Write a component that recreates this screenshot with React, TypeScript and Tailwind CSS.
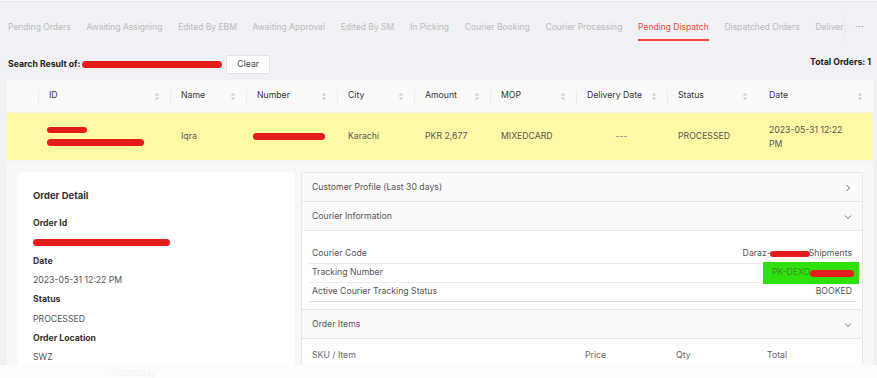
import React from "react";

const tabs = [
  "Pending Orders",
  "Awaiting Assigning",
  "Edited By EBM",
  "Awaiting Approval",
  "Edited By SM",
  "In Picking",
  "Courier Booking",
  "Courier Processing",
  "Pending Dispatch",
  "Dispatched Orders",
  "Deliver",
];

const cols: { label: string; w: string; sort: boolean }[] = [
  { label: "", w: "w-[31px]", sort: false },
  { label: "ID", w: "w-[132px]", sort: true },
  { label: "Name", w: "w-[76px]", sort: true },
  { label: "Number", w: "w-[91px]", sort: true },
  { label: "City", w: "w-[77px]", sort: true },
  { label: "Amount", w: "w-[76px]", sort: true },
  { label: "MOP", w: "w-[86px]", sort: true },
  { label: "Delivery Date", w: "w-[91px]", sort: true },
  { label: "Status", w: "w-[91px]", sort: true },
  { label: "Date", w: "w-[115px]", sort: true },
];

function Sort() {
  return (
    <svg width="6" height="9" viewBox="0 0 6 9" className="shrink-0">
      <path d="M3 1 L5.2 3.4 H0.8 Z" fill="#cacaca" />
      <path d="M3 8 L5.2 5.6 H0.8 Z" fill="#cacaca" />
    </svg>
  );
}

function ChevronRight() {
  return (
    <svg width="8" height="8" viewBox="0 0 8 8">
      <path d="M2.5 1 L5.5 4 L2.5 7" fill="none" stroke="#555" strokeWidth="0.9" />
    </svg>
  );
}

function ChevronDown() {
  return (
    <svg width="8" height="8" viewBox="0 0 8 8">
      <path d="M1 2.5 L4 5.5 L7 2.5" fill="none" stroke="#666" strokeWidth="0.9" />
    </svg>
  );
}

function Red({ cls }: { cls: string }) {
  return <span className={`block rounded-full bg-[#e41c1c] ${cls}`} />;
}

export default function App() {
  return (
    <div className="relative w-[877px] h-[378px] overflow-hidden bg-[#f0f1f5] font-['Inter',sans-serif] text-[8.7px] text-[#444]">
      <div className="h-[2px] bg-[#f7f7f9] border-b border-[#e6e7ea]" />
      {/* tabs */}
      <div className="flex items-start mt-[13px]">
        <div className="flex gap-[15.75px] pl-[8px] w-[845px] overflow-hidden whitespace-nowrap text-[8.5px]">
          {tabs.map((t) => {
            const active = t === "Pending Dispatch";
            return (
              <div
                key={t}
                className={`h-[26px] flex items-center border-b-2 ${
                  active
                    ? "border-[#ef4a38] text-[#ef4a38]"
                    : "border-transparent text-[#bcbcbc]"
                }`}
              >
                {t}
              </div>
            );
          })}
        </div>
        <div className="h-[26px] w-[1px] bg-[#e9eaee] shadow-[-2px_0_4px_rgba(0,0,0,0.06)]" />
        <div className="h-[26px] flex items-center pl-[9px] text-[#888] tracking-[0.5px]">···</div>
      </div>

      {/* search row */}
      <div className="flex justify-between items-start mt-[14px] pl-[8px] pr-[6px]">
        <div className="flex items-center">
          <span className="font-bold text-[#222]">Search Result of:</span>
          <Red cls="w-[140px] h-[7px] ml-[2px]" />
          <button className="ml-[4px] h-[19px] px-[10px] bg-white border border-[#e2e2e2] rounded-[2px] text-[#444]">
            Clear
          </button>
        </div>
        <span className="font-bold text-[#222] mt-[1px]">Total Orders: 1</span>
      </div>

      {/* table */}
      <div className="ml-[7px] mr-[4px] mt-[6px]">
        <div className="flex h-[33px] bg-[#fafafa] border-b border-[#f0f0f0] text-[#333]">
          {cols.map((c, i) => (
            <div key={i} className={`${c.w} relative flex items-center pl-[11px] pr-[10px] justify-between`}>
              {i > 0 && i < 9 && (
                <span className="absolute left-0 top-[10px] h-[14px] w-px bg-[#ececec]" />
              )}
              <span>{c.label}</span>
              {c.sort && <Sort />}
            </div>
          ))}
        </div>
        <div className="flex h-[47px] bg-[#fef9a4] text-[#555] items-center">
          <div className="w-[31px]" />
          <div className="w-[132px] pl-[9px] flex flex-col gap-[6px]">
            <Red cls="w-[40px] h-[6px]" />
            <Red cls="w-[97px] h-[7px]" />
          </div>
          <div className="w-[76px] pl-[11px]">Iqra</div>
          <div className="w-[91px] pl-[7px]">
            <Red cls="w-[72px] h-[7px]" />
          </div>
          <div className="w-[77px] pl-[11px]">Karachi</div>
          <div className="w-[76px] pl-[11px]">PKR 2,677</div>
          <div className="w-[86px] pl-[11px]">MIXEDCARD</div>
          <div className="w-[91px] text-center text-[#888]">---</div>
          <div className="w-[91px] pl-[11px]">PROCESSED</div>
          <div className="w-[115px] pl-[11px] leading-[14px]">
            2023-05-31 12:22
            <br />
            PM
          </div>
        </div>

        {/* expanded */}
        <div className="flex gap-[6px] bg-[#f8f8fa] pl-[11px] pr-[10px] pt-[11px] h-[220px] border-t border-[#f3f3f3]">
          <div className="w-[277px] bg-white rounded-[4px] pl-[15px] pt-[17px] text-[#555]">
            <div className="font-bold text-[9.5px] text-[#333] leading-[14px]">Order Detail</div>
            <div className="mt-[11px] flex flex-col">
              <div className="font-bold text-[#333] leading-[19px]">Order Id</div>
              <div className="h-[19px] flex items-center">
                <Red cls="w-[137px] h-[7px]" />
              </div>
              <div className="font-bold text-[#333] leading-[19.2px]">Date</div>
              <div className="leading-[19.2px]">2023-05-31 12:22 PM</div>
              <div className="font-bold text-[#333] leading-[19.2px]">Status</div>
              <div className="leading-[19.2px]">PROCESSED</div>
              <div className="font-bold text-[#333] leading-[19.2px]">Order Location</div>
              <div className="leading-[19.2px]">SWZ</div>
            </div>
          </div>

          <div className="flex-1 bg-white border border-[#e6e6e6] rounded-[2px] text-[#555] self-start">
            <div className="h-[29px] pt-[1px] bg-[#fafafa] border-b border-[#e6e6e6] flex items-center justify-between pl-[10px] pr-[10px]">
              <span>Customer Profile (Last 30 days)</span>
              <ChevronRight />
            </div>
            <div className="h-[29px] pt-[1px] bg-[#fafafa] border-b border-[#e6e6e6] flex items-center justify-between pl-[10px] pr-[10px]">
              <span>Courier Information</span>
              <ChevronDown />
            </div>
            <div className="px-[7px] pt-[14px] pb-[7px]">
              <div className="h-[19px] flex items-center justify-between border-b border-[#ececec] px-[3px]">
                <span>Courier Code</span>
                <span className="flex items-center">
                  Daraz-
                  <Red cls="w-[40px] h-[6px] -mx-[1px]" />
                  Shipments
                </span>
              </div>
              <div className="relative h-[19px] flex items-center justify-between border-b border-[#ececec] px-[3px]">
                <span>Tracking Number</span>
                <span className="absolute right-[-4px] top-[-2px] h-[22px] w-[96px] bg-[#2ee00c] flex items-center pl-[9px] text-[#3b8d2a]">
                  PK-DEXO
                  <Red cls="w-[44px] h-[7px]" />
                </span>
              </div>
              <div className="h-[19px] flex items-center justify-between border-b border-[#dcdcdc] px-[3px]">
                <span>Active Courier Tracking Status</span>
                <span>BOOKED</span>
              </div>
            </div>
            <div className="h-[30px] pt-[1px] bg-[#fafafa] border-y border-[#e6e6e6] flex items-center justify-between pl-[10px] pr-[10px]">
              <span>Order Items</span>
              <ChevronDown />
            </div>
            <div className="flex h-[32px] pt-[1px] items-center pl-[10px] text-[#666]">
              <span className="w-[273px]">SKU / Item</span>
              <span className="w-[91px]">Price</span>
              <span className="w-[91px]">Qty</span>
              <span>Total</span>
            </div>
          </div>
        </div>
      </div>

      {/* bottom overlay strip */}
      <div className="absolute left-0 right-0 bottom-0 h-[13px] bg-[#fdfdfd] flex">
        <span className="ml-[110px] mt-[1px] text-[10px] text-[#f4f4f5] leading-[12px]">Yesterday</span>
      </div>
    </div>
  );
}
